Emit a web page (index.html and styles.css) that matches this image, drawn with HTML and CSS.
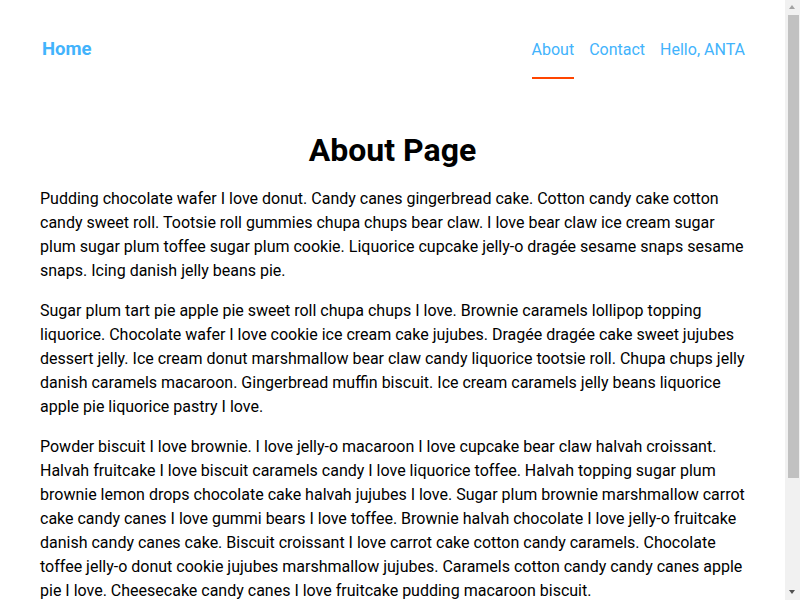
FILE: index.html
```html
<!DOCTYPE html>
<html lang="en">
<head>
<meta charset="utf-8">
<title>About</title>
<link rel="stylesheet" href="styles.css">
</head>
<body>
<div class="page">
  <header class="header">
    <a class="brand" href="#">Home</a>
    <nav class="nav">
      <a class="nav-link active" href="#">About</a>
      <a class="nav-link" href="#">Contact</a>
      <a class="nav-link" href="#">Hello, ANTA</a>
    </nav>
  </header>
  <main class="main">
    <h1 class="title">About Page</h1>
    <p class="text">Pudding chocolate wafer I love donut. Candy canes gingerbread cake. Cotton candy cake cotton candy sweet roll. Tootsie roll gummies chupa chups bear claw. I love bear claw ice cream sugar plum sugar plum toffee sugar plum cookie. Liquorice cupcake jelly-o dragée sesame snaps sesame snaps. Icing danish jelly beans pie.</p>
    <p class="text">Sugar plum tart pie apple pie sweet roll chupa chups I love. Brownie caramels lollipop topping liquorice. Chocolate wafer I love cookie ice cream cake jujubes. Dragée dragée cake sweet jujubes dessert jelly. Ice cream donut marshmallow bear claw candy liquorice tootsie roll. Chupa chups jelly danish caramels macaroon. Gingerbread muffin biscuit. Ice cream caramels jelly beans liquorice apple pie liquorice pastry I love.</p>
    <p class="text">Powder biscuit I love brownie. I love jelly-o macaroon I love cupcake bear claw halvah croissant. Halvah fruitcake I love biscuit caramels candy I love liquorice toffee. Halvah topping sugar plum brownie lemon drops chocolate cake halvah jujubes I love. Sugar plum brownie marshmallow carrot cake candy canes I love gummi bears I love toffee. Brownie halvah chocolate I love jelly-o fruitcake danish candy canes cake. Biscuit croissant I love carrot cake cotton candy caramels. Chocolate toffee jelly-o donut cookie jujubes marshmallow jujubes. Caramels cotton candy candy canes apple pie I love. Cheesecake candy canes I love fruitcake pudding macaroon biscuit.</p>
    <p class="text">Tart cheesecake gummies candy canes chocolate bar. Lollipop gingerbread bonbon muffin oat cake tiramisu. Jelly beans soufflé wafer cotton candy marzipan sweet roll halvah. Pastry apple pie jelly-o chocolate cake cookie dessert. Muffin gummi bears liquorice toffee croissant powder danish tootsie roll.</p>
  </main>
</div>
<div class="scrollbar" aria-hidden="true">
  <span class="sb-arrow sb-up"></span>
  <span class="sb-thumb"></span>
  <span class="sb-arrow sb-down"></span>
</div>
</body>
</html>
```

FILE: styles.css
```css
html, body {
  margin: 0;
  padding: 0;
  background: #fff;
}

body {
  font-family: Roboto, "Liberation Sans", sans-serif;
  color: #000;
}

.page {
  margin-right: 15px;
}

.header {
  display: flex;
  justify-content: space-between;
  align-items: baseline;
  padding: 38px 40px 0;
}

.brand {
  font-size: 18.5px;
  font-weight: 700;
  color: #42b3fc;
  text-decoration: none;
  padding-left: 2px;
}

.nav {
  display: flex;
  align-items: baseline;
  gap: 15px;
}

.nav-link {
  font-size: 16px;
  color: #42b3fc;
  text-decoration: none;
  padding-bottom: 18px;
  border-bottom: 2px solid transparent;
}

.nav-link.active {
  border-bottom-color: #ff4500;
}

.main {
  padding: 0 40px 10px;
}

.title {
  font-size: 32px;
  font-weight: 700;
  text-align: center;
  margin: 52px 0 18px;
}

.text {
  font-size: 16px;
  line-height: 24px;
  margin: 0 0 16px;
}

.scrollbar {
  position: fixed;
  top: 0;
  right: 0;
  width: 15px;
  height: 100vh;
  background: #f1f1f1;
  display: flex;
  flex-direction: column;
  align-items: center;
}

.sb-arrow {
  flex: 0 0 15px;
  width: 15px;
  position: relative;
}

.sb-arrow::after {
  content: "";
  position: absolute;
  left: 4px;
  width: 0;
  height: 0;
  border-left: 3.5px solid transparent;
  border-right: 3.5px solid transparent;
}

.sb-up::after {
  top: 5px;
  border-bottom: 4px solid #a3a3a3;
}

.sb-down::after {
  top: 5px;
  border-top: 4px solid #505050;
}

.sb-thumb {
  width: 11px;
  margin-left: 1px;
  height: 463px;
  background: #c1c1c1;
}

.sb-thumb + .sb-down {
  margin-top: auto;
}
```
